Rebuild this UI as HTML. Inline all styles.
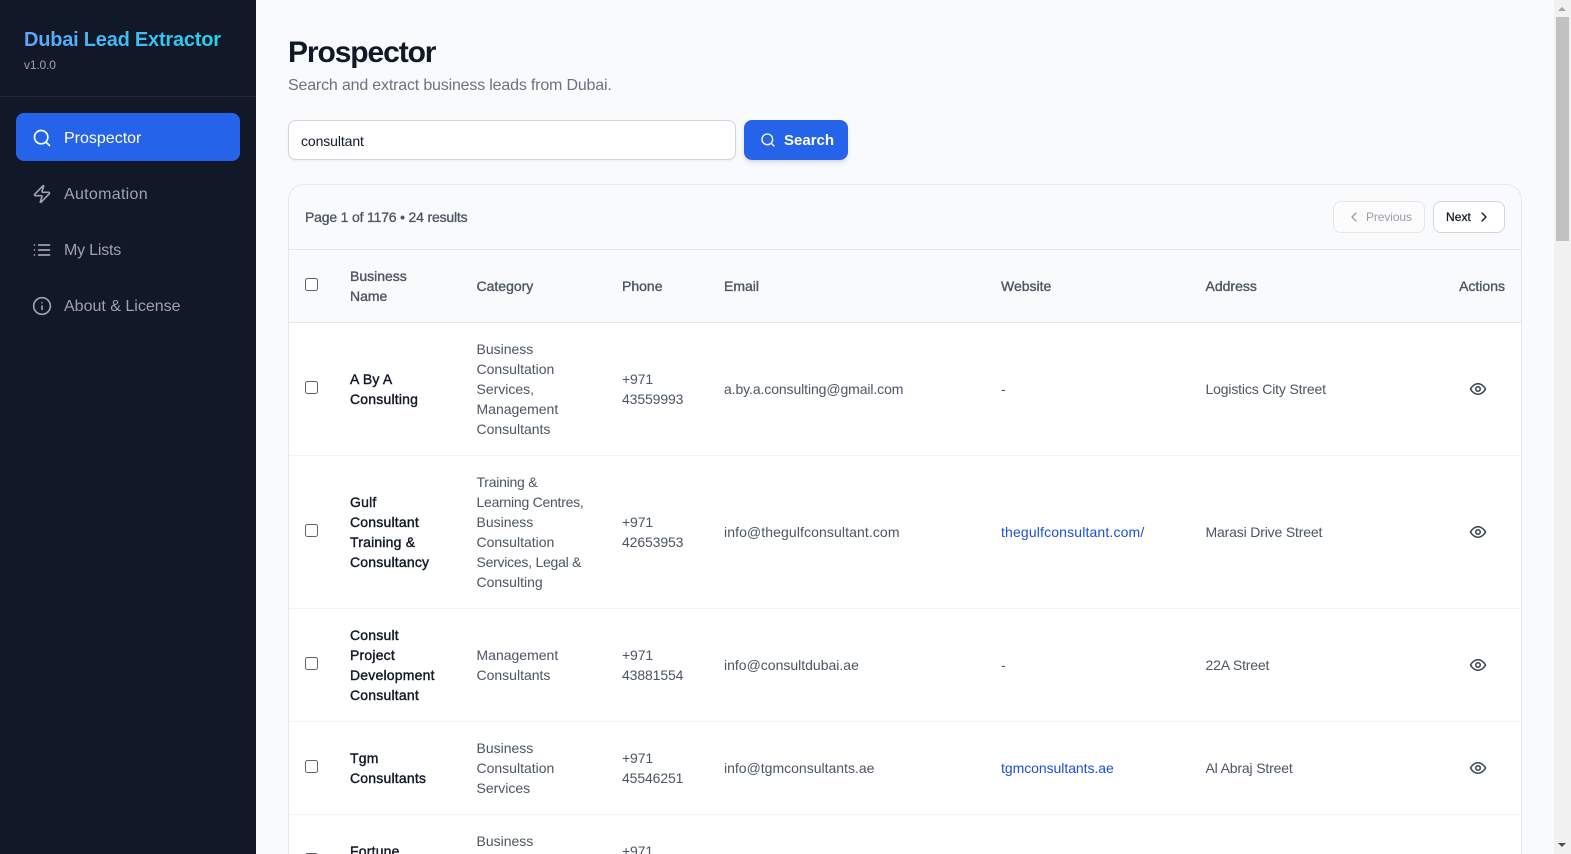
<!DOCTYPE html>
<html lang="en"><head><meta charset="utf-8"><title>Dubai Lead Extractor</title>
<style>
*{box-sizing:border-box}
html,body{margin:0;padding:0;width:1571px;height:854px;overflow:hidden;background:#f9fafb;font-family:"Liberation Sans",Arial,sans-serif;color:#374151}
#app{position:relative;width:1571px;height:854px;overflow:hidden;background:#f9fafb}
.side{position:absolute;left:0;top:0;width:256px;height:854px;background:#111827}
.brand{position:absolute;left:24px;top:28px;font-size:20px;line-height:24px;font-weight:700;letter-spacing:-.22px;background:linear-gradient(90deg,#60a5fa,#22d3ee);-webkit-background-clip:text;background-clip:text;color:transparent;white-space:nowrap}
.ver{position:absolute;left:24px;top:57px;font-size:12px;line-height:16px;color:#9ca3af;letter-spacing:-.15px}
.sep{position:absolute;left:0;top:96px;width:256px;height:1px;background:#1f2937}
.nav{position:absolute;left:16px;width:224px;height:48px;border-radius:8px;color:#9ca3af;font-size:16px;line-height:52px;padding-left:48px;white-space:nowrap}
.nav svg{position:absolute;left:16px;top:15px}
.nav.on{background:#2563eb;color:#fff}
h1{position:absolute;left:288px;top:35px;margin:0;font-size:30px;line-height:36px;font-weight:700;color:#111827;letter-spacing:-1.1px}
.sub{position:absolute;left:288px;top:74px;font-size:16px;line-height:24px;color:#6b7280;letter-spacing:-.18px;white-space:nowrap}
.inp{position:absolute;left:288px;top:120px;width:448px;height:40px;background:#fff;border:1px solid #d1d5db;border-radius:8px;box-shadow:0 1px 2px rgba(0,0,0,.05);font-size:14px;line-height:40px;padding-left:12px;color:#111827;letter-spacing:-.1px}
.btn{position:absolute;left:744px;top:120px;width:104px;height:40px;background:#2563eb;border-radius:8px;color:#fff;font-size:15px;font-weight:700;line-height:42px;padding-left:40px;box-shadow:0 4px 6px -1px rgba(0,0,0,.1),0 2px 4px -2px rgba(0,0,0,.1)}
.btn svg{position:absolute;left:16px;top:12px}
.card{position:absolute;left:288px;top:184px;width:1234px;height:670px;background:#fff;border:1px solid #e5e7eb;border-bottom:0;border-radius:16px 16px 0 0;overflow:hidden}
.top{height:65px;background:#f9fafb;border-bottom:1px solid #e5e7eb;position:relative}
.pg{position:absolute;left:16px;top:22px;font-size:14px;line-height:20px;color:#4b5563;letter-spacing:-.18px;-webkit-text-stroke:.3px #4b5563;white-space:nowrap}
.pb{position:absolute;top:16px;height:32px;border:1px solid #d1d5db;border-radius:8px;background:#fff;font-size:12px;line-height:31px;color:#374151;white-space:nowrap;letter-spacing:-.1px}
.pb svg{position:absolute;top:7px}
table{border-collapse:collapse;table-layout:fixed;width:1232px;font-size:14px;line-height:20px}
th{background:#f9fafb;text-align:left;padding:16px;font-weight:400;color:#4b5563;border-bottom:1px solid #e5e7eb;-webkit-text-stroke:.35px #4b5563;vertical-align:middle}
td{padding:16px;border-bottom:1px solid #f3f4f6;color:#4b5563;vertical-align:middle;white-space:nowrap}
td.n{color:#111827;-webkit-text-stroke:.4px #111827;letter-spacing:.2px}
td.p{letter-spacing:-.12px}
td.addr{letter-spacing:-.16px;position:relative}
td.addr svg{position:absolute;right:34px}
tr.last td{padding:0;border-bottom:0;vertical-align:top}
.clip{height:39px;overflow:hidden;padding-left:16px}
a{color:#1d4ed8;text-decoration:none}
.cb{display:block;position:relative;top:-2px;width:13px;height:13px;border:1px solid #5f6368;border-radius:2.5px;background:#fff}
.sb{position:absolute;left:1554px;top:0;width:17px;height:854px;background:#f1f1f1}
.th{position:absolute;left:2px;top:17px;width:13px;height:224px;background:#c1c1c1}
.up,.dn{position:absolute;left:4px;width:0;height:0;border-left:4px solid transparent;border-right:4px solid transparent}
.up{top:7px;border-bottom:4px solid #a3a3a3}
.dn{top:843px;border-top:4px solid #505050}
</style></head><body>
<div id="app">
<div class="side">
<div class="brand">Dubai Lead Extractor</div>
<div class="ver">v1.0.0</div>
<div class="sep"></div>
<div class="nav on" style="top:113px"><svg width="20" height="20" viewBox="0 0 24 24" fill="none" stroke="currentColor" stroke-width="2" stroke-linecap="round" stroke-linejoin="round"><circle cx="11" cy="11" r="8"/><path d="m21 21-4.3-4.3"/></svg>Prospector</div>
<div class="nav" style="top:169px;letter-spacing:.3px"><svg width="20" height="20" viewBox="0 0 24 24" fill="none" stroke="currentColor" stroke-width="2" stroke-linecap="round" stroke-linejoin="round"><path d="M4 14a1 1 0 0 1-.78-1.63l9.9-10.2a.5.5 0 0 1 .86.46l-1.92 6.02A1 1 0 0 0 13 10h7a1 1 0 0 1 .78 1.63l-9.9 10.2a.5.5 0 0 1-.86-.46l1.92-6.02A1 1 0 0 0 11 14z"/></svg>Automation</div>
<div class="nav" style="top:225px;letter-spacing:-.2px"><svg width="20" height="20" viewBox="0 0 24 24" fill="none" stroke="currentColor" stroke-width="2" stroke-linecap="round" stroke-linejoin="round"><path d="M8 6h13M8 12h13M8 18h13M3 6h.01M3 12h.01M3 18h.01"/></svg>My Lists</div>
<div class="nav" style="top:281px"><svg width="20" height="20" viewBox="0 0 24 24" fill="none" stroke="currentColor" stroke-width="2" stroke-linecap="round" stroke-linejoin="round"><circle cx="12" cy="12" r="10"/><path d="M12 16v-4M12 8h.01"/></svg>About &amp; License</div>
</div>
<h1>Prospector</h1>
<div class="sub">Search and extract business leads from Dubai.</div>
<div class="inp">consultant</div>
<div class="btn"><svg width="16" height="16" viewBox="0 0 24 24" fill="none" stroke="currentColor" stroke-width="2" stroke-linecap="round" stroke-linejoin="round"><circle cx="11" cy="11" r="8"/><path d="m21 21-4.3-4.3"/></svg>Search</div>
<div class="card">
<div class="top">
<div class="pg">Page 1 of 1176 • 24 results</div>
<div class="pb" style="left:1044px;width:92px;padding-left:32px;opacity:.5"><svg style="left:12px" width="16" height="16" viewBox="0 0 24 24" fill="none" stroke="currentColor" stroke-width="2" stroke-linecap="round" stroke-linejoin="round"><path d="m15 18-6-6 6-6"/></svg>Previous</div>
<div class="pb" style="left:1144px;width:72px;padding-left:12px;color:#111827;-webkit-text-stroke:.25px #111827;letter-spacing:.05px"><svg style="left:42px" width="16" height="16" viewBox="0 0 24 24" fill="none" stroke="currentColor" stroke-width="2" stroke-linecap="round" stroke-linejoin="round"><path d="m9 18 6-6-6-6"/></svg>Next</div>
</div>
<table>
<colgroup><col style="width:45px"><col style="width:126.5px"><col style="width:145.5px"><col style="width:102px"><col style="width:277px"><col style="width:204.5px"><col style="width:331.5px"></colgroup>
<tr><th><span class="cb"></span></th><th>Business<br>Name</th><th>Category</th><th>Phone</th><th>Email</th><th>Website</th><th style="position:relative">Address<span style="position:absolute;right:16px;top:26px">Actions</span></th></tr>
<tr><td><span class="cb"></span></td><td class="n">A By A<br>Consulting</td><td>Business<br>Consultation<br>Services,<br>Management<br>Consultants</td><td class="p">+971<br>43559993</td><td style="letter-spacing:-.1px">a.by.a.consulting@gmail.com</td><td>-</td><td class="addr">Logistics City Street<svg style="top:57px" width="18" height="18" viewBox="0 0 24 24" fill="none" stroke="#374151" stroke-width="2" stroke-linecap="round" stroke-linejoin="round"><path d="M2 12s3.5-7 10-7 10 7 10 7-3.5 7-10 7-10-7-10-7z"/><circle cx="12" cy="12" r="3"/></svg></td></tr>
<tr><td><span class="cb"></span></td><td class="n">Gulf<br>Consultant<br>Training &amp;<br>Consultancy</td><td><span style="letter-spacing:-.25px">Training &amp;<br>Learning Centres,</span><br>Business<br>Consultation<br><span style="letter-spacing:-.25px">Services, Legal &amp;</span><br>Consulting</td><td class="p">+971<br>42653953</td><td style="letter-spacing:.1px">info@thegulfconsultant.com</td><td style="letter-spacing:.15px"><a>thegulfconsultant.com/</a></td><td class="addr">Marasi Drive Street<svg style="top:67px" width="18" height="18" viewBox="0 0 24 24" fill="none" stroke="#374151" stroke-width="2" stroke-linecap="round" stroke-linejoin="round"><path d="M2 12s3.5-7 10-7 10 7 10 7-3.5 7-10 7-10-7-10-7z"/><circle cx="12" cy="12" r="3"/></svg></td></tr>
<tr><td><span class="cb"></span></td><td class="n">Consult<br>Project<br>Development<br>Consultant</td><td>Management<br>Consultants</td><td class="p">+971<br>43881554</td><td>info@consultdubai.ae</td><td>-</td><td class="addr">22A Street<svg style="top:47px" width="18" height="18" viewBox="0 0 24 24" fill="none" stroke="#374151" stroke-width="2" stroke-linecap="round" stroke-linejoin="round"><path d="M2 12s3.5-7 10-7 10 7 10 7-3.5 7-10 7-10-7-10-7z"/><circle cx="12" cy="12" r="3"/></svg></td></tr>
<tr><td><span class="cb"></span></td><td class="n">Tgm<br>Consultants</td><td>Business<br>Consultation<br>Services</td><td class="p">+971<br>45546251</td><td>info@tgmconsultants.ae</td><td style="letter-spacing:-.05px"><a>tgmconsultants.ae</a></td><td class="addr">Al Abraj Street<svg style="top:37px" width="18" height="18" viewBox="0 0 24 24" fill="none" stroke="#374151" stroke-width="2" stroke-linecap="round" stroke-linejoin="round"><path d="M2 12s3.5-7 10-7 10 7 10 7-3.5 7-10 7-10-7-10-7z"/><circle cx="12" cy="12" r="3"/></svg></td></tr>
<tr class="last"><td><div class="clip" style="padding-top:38px"><span class="cb" style="top:0"></span></div></td><td><div class="clip" style="padding-top:26px;color:#111827;-webkit-text-stroke:.4px #111827;letter-spacing:.2px">Fortune</div></td><td><div class="clip" style="padding-top:16px">Business</div></td><td><div class="clip" style="padding-top:26px;letter-spacing:-.12px">+971</div></td><td></td><td></td><td></td></tr>
</table>
</div>
<div class="sb"><div class="up"></div><div class="th"></div><div class="dn"></div></div>
</div>
</body></html>
